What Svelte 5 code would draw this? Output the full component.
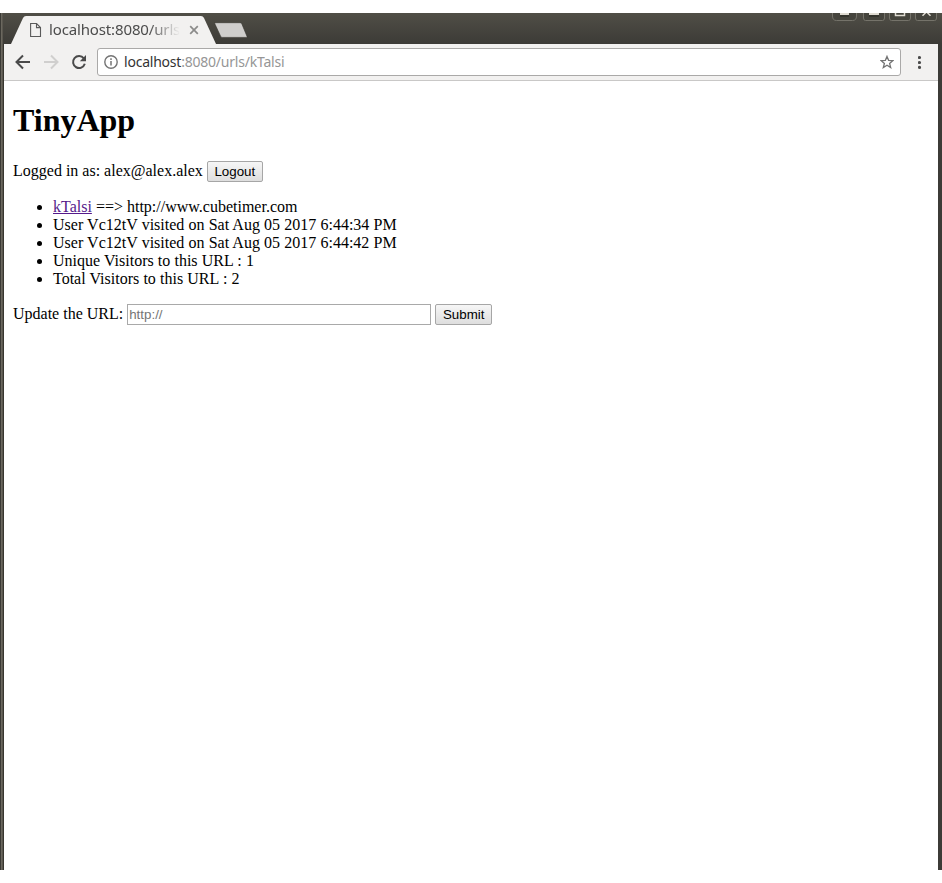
<script>
  const visits = ['Sat Aug 05 2017 6:44:34 PM', 'Sat Aug 05 2017 6:44:42 PM'];
</script>

<div class="screen">
  <div class="window">
    <header class="titlebar">
      <div class="tab">
        <svg class="tab-shape" width="206" height="28" viewBox="0 0 206 28">
          <path d="M0 28 L12 2 Q13 0 15 0 H190 Q192 0 193 2 L205 28Z" fill="#f2f1f0" />
        </svg>
        <svg class="page-icon" width="12" height="14" viewBox="0 0 12 14" fill="none" stroke="#5a5a5a" stroke-width="1.1">
          <path d="M.6 .5H6.5L10.5 4.5V13.5H.6Z" />
          <path d="M6.5 .8V4.6H10.2" />
        </svg>
        <span class="tab-title">localhost:8080/urls/</span>
        <svg class="tab-close" width="10" height="10" viewBox="0 0 10 10" stroke="#8b8b8a" stroke-width="1.7">
          <path d="M1.2 1.2L8.8 8.8M8.8 1.2L1.2 8.8" />
        </svg>
      </div>
      <svg class="new-tab" width="34" height="17" viewBox="0 0 34 17">
        <path d="M1.5 .7H26Q27.3 .7 27.8 1.8L33 14.4Q33.3 15.4 32.4 15.4H8.5Q7.2 15.4 6.7 14.4L.8 1.8Q.4 .7 1.5 .7Z" fill="#cfcecc" stroke="#34332e" stroke-width=".6" />
      </svg>
      <svg class="controls" width="108" height="9" viewBox="0 0 108 9" fill="none" stroke="#75736a">
        <path fill="#45443d" d="M.5-5V3Q.5 7.5 4.5 7.5H20.5Q24.5 7.5 24.5 3V-5M31.5-5V5Q31.5 7.5 33.5 7.5H50.5Q52.5 7.5 52.5 5V-5M57.5-5V5Q57.5 7.5 59.5 7.5H76.5Q78.5 7.5 78.5 5V-5M83.5-5V5Q83.5 7.5 85.5 7.5H102.5Q104.5 7.5 104.5 5V-5" />
        <path d="M8 3H17M37 3H47" stroke="#25241f" stroke-width="1" />
        <path d="M8 1H17M37 1H47" stroke="#dfdbd2" stroke-width="2" />
        <path d="M63.5-3V2.5H72.5V-3M90.5 2.8L94.5-1.2L98.5 2.8" stroke="#dfdbd2" stroke-width="1.5" />
      </svg>
    </header>

    <div class="body">
      <nav class="toolbar">
        <svg width="16" height="16" viewBox="0 0 16 16" fill="none" stroke="#4a4a4a" stroke-width="2">
          <path d="M15 8H2M8 1.5L1.5 8L8 14.5" />
        </svg>
        <svg class="forward" width="16" height="16" viewBox="0 0 16 16" fill="none" stroke="#d0cfce" stroke-width="2">
          <path d="M1 8H14M8 1.5L14.5 8L8 14.5" />
        </svg>
        <svg class="reload" width="16" height="16" viewBox="0 0 16 16">
          <path d="M12.8 4.3A6 6 0 1 0 13.8 9.8" fill="none" stroke="#4a4a4a" stroke-width="2" />
          <path d="M15 1V7.2H8.8Z" fill="#4a4a4a" />
        </svg>
        <div class="address">
          <svg width="14" height="14" viewBox="0 0 14 14" fill="none" stroke="#747474">
            <circle cx="7" cy="7" r="6.2" stroke-width="1.4" />
            <path d="M7 6V10.5M7 3.3V4.9" stroke-width="1.5" />
          </svg>
          <span class="url">localhost<span>:8080/urls/kTalsi</span></span>
          <svg class="star" width="14" height="14" viewBox="0 0 14 14" fill="none" stroke="#747474" stroke-width="1.3">
            <path d="M7 1.4L8.6 5.3L12.9 5.6L9.6 8.4L10.7 12.6L7 10.3L3.3 12.6L4.4 8.4L1.1 5.6L5.4 5.3Z" />
          </svg>
        </div>
        <svg class="menu" width="4" height="14" viewBox="0 0 4 14" fill="#4a4a4a">
          <circle cx="1.5" cy="2.5" r="1.6" /><circle cx="1.5" cy="7.5" r="1.6" /><circle cx="1.5" cy="12.4" r="1.6" />
        </svg>
      </nav>

      <main>
        <h1>TinyApp</h1>
        <form>Logged in as: alex@alex.alex <button type="button">Logout</button></form>
        <ul>
          <li><a href="#kTalsi">kTalsi</a> ==&gt; http://www.cubetimer.com</li>
          {#each visits as visit}
            <li class="stat">User Vc12tV visited on {visit}</li>
          {/each}
          <li class="stat">Unique Visitors to this URL : 1</li>
          <li class="stat">Total Visitors to this URL : 2</li>
        </ul>
        <form>Update the URL: <input type="text" placeholder="http://" /> <button class="submit" type="button">Submit</button></form>
      </main>
    </div>
  </div>
</div>

<style>
  .screen {
    box-sizing: border-box;
    height: 883px;
    padding: 13px 0;
    background: #fff;
  }
  .window {
    display: flex;
    flex-direction: column;
    height: 857px;
    overflow: hidden;
    background: linear-gradient(90deg, #3b3a35 0 1px, #6b685f 1px 2px, #5a574f 2px 3px, #38362f 3px 4px, #3c3b37 4px);
  }
  .titlebar {
    display: flex;
    flex: none;
    height: 31px;
    margin-left: 3px;
    background: linear-gradient(#504e46, #3c3b37);
  }
  .tab {
    position: relative;
    display: flex;
    align-items: center;
    box-sizing: border-box;
    width: 206px;
    height: 28px;
    margin: 3px 0 0 8px;
    padding-left: 19px;
  }
  .tab-shape {
    position: absolute;
    inset: 0;
  }
  .page-icon,
  .tab-title,
  .tab-close {
    position: relative;
  }
  .tab-title {
    width: 131px;
    margin-left: 7px;
    padding-bottom: 2px;
    white-space: nowrap;
    font: 15px/20px 'Noto Sans', sans-serif;
    letter-spacing: -0.14px;
    color: #4c4c4c;
    mask-image: linear-gradient(90deg, #000 100px, transparent 131px);
  }
  .tab-close {
    margin-left: 9px;
  }
  .new-tab {
    margin: 9px 0 0 -3px;
  }
  .controls {
    margin-left: auto;
    margin-right: 2px;
  }
  .body {
    display: flex;
    flex: 1;
    flex-direction: column;
    margin: 0 4px;
    background: #fff;
  }
  .toolbar {
    display: flex;
    align-items: center;
    box-sizing: border-box;
    height: 37px;
    padding: 0 16px 1px 11px;
    background: #f2f1f0;
    border-bottom: 1px solid #c9c8c7;
  }
  .forward {
    margin-left: 12px;
  }
  .reload {
    margin-left: 12px;
  }
  .address {
    display: flex;
    flex: 1;
    align-items: center;
    box-sizing: border-box;
    height: 28px;
    margin: 0 17px 0 10px;
    padding: 0 6px;
    background: #fff;
    border: 1px solid #aaa9a8;
    border-radius: 3px;
  }
  .url {
    margin-left: 6px;
    font: 14px/20px 'Noto Sans', sans-serif;
    letter-spacing: -0.22px;
    color: #333;
  }
  .url span {
    color: #969696;
  }
  .star {
    margin-left: auto;
  }
  main {
    display: flow-root;
    padding: 0 9px;
    font: 16px/18px 'Liberation Serif', serif;
    color: #000;
  }
  h1 {
    margin: 21px 0 22px;
    font-size: 32px;
    line-height: 37px;
  }
  ul {
    margin: 16px 0;
    padding-left: 40px;
  }
  .stat {
    word-spacing: 0.17px;
  }
  a {
    color: #551a8b;
  }
  button {
    box-sizing: border-box;
    width: 56px;
    height: 21px;
    padding: 0;
    border: 1px solid #a6a6a6;
    border-radius: 2px;
    background: linear-gradient(#f6f6f6, #dedede);
    font: 13.333px 'Liberation Sans', sans-serif;
    color: #000;
  }
  .submit {
    width: 57px;
  }
  input {
    box-sizing: border-box;
    width: 304px;
    height: 21px;
    margin: 0;
    padding: 1px;
    border: 1px solid #a9a9a9;
    font: 13.333px 'Liberation Sans', sans-serif;
  }
  input::placeholder {
    color: #757575;
  }
</style>
